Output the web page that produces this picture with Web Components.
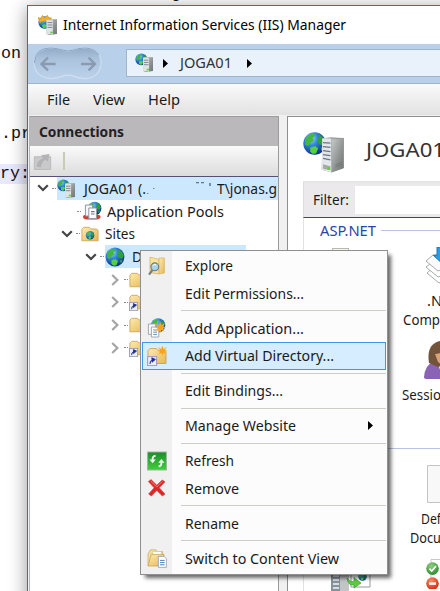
<!DOCTYPE html>
<html lang="en">
<head>
<meta charset="utf-8">
<title>Internet Information Services (IIS) Manager</title>
<style>
html,body{margin:0;width:440px;height:591px;overflow:hidden;background:#fff}
</style>
</head>
<body>
<iis-desktop></iis-desktop>
<script>
const define=(name,html,setup)=>customElements.define(name,class extends HTMLElement{
  connectedCallback(){
    if(this.shadowRoot)return;
    const r=this.attachShadow({mode:'open'});
    r.innerHTML=typeof html==='function'?html(this):html;
    if(setup)setup(this,r);
  }
});

/* One line of text, condensed to the width given in "w". */
define('fit-text','<style>:host{display:block;flex:none;white-space:nowrap}span{display:inline-block;transform-origin:0 50%}</style><span><slot></slot></span>',(el,r)=>{
  const w=+el.getAttribute('w');
  if(!w)return;
  const s=r.querySelector('span');
  s.style.transform='scaleX('+w/s.getBoundingClientRect().width+')';
  el.style.width=w+'px';
});

const defs=`<defs>
<radialGradient id="sea" cx=".35" cy=".28" r=".75"><stop offset="0" stop-color="#9fdcff"/><stop offset=".4" stop-color="#2f86d8"/><stop offset="1" stop-color="#0b2f86"/></radialGradient>
<linearGradient id="fold" x1="0" y1="0" x2="1" y2="1"><stop offset="0" stop-color="#fdebaf"/><stop offset="1" stop-color="#e6b752"/></linearGradient>
<linearGradient id="srv" x1="0" y1="0" x2="1" y2="1"><stop offset="0" stop-color="#c9cccb"/><stop offset=".6" stop-color="#8d9291"/><stop offset="1" stop-color="#6f7573"/></linearGradient>
<linearGradient id="grn" x1="0" y1="0" x2="0" y2="1"><stop offset="0" stop-color="#1e8a2c"/><stop offset="1" stop-color="#3fd03c"/></linearGradient>
<radialGradient id="ok" cx=".4" cy=".3" r=".7"><stop offset="0" stop-color="#8fd07a"/><stop offset="1" stop-color="#2f8a35"/></radialGradient>
<radialGradient id="no" cx=".4" cy=".3" r=".7"><stop offset="0" stop-color="#ff8a62"/><stop offset="1" stop-color="#d32d0c"/></radialGradient>
</defs>`;
/* A globe in a 20-unit box, placed at x,y with scale s. */
const globe=(x,y,s)=>`<g transform="translate(${x} ${y}) scale(${s})"><circle cx="10" cy="10" r="9.4" fill="url(#sea)"/><path d="M2.2 7Q4 2.6 8.6 1.6L10.6 3 8.4 5.4 9.4 7.6 6 9.6 4.6 12 2 11Z" fill="#45b83c"/><path d="M13 2.2Q17.6 4 18.8 8.6L17 12 13.6 10.4 12 6.6 14 4.6Z" fill="#2fa03c"/><path d="M6.4 13.2 10.4 12 13 14 11.2 18.4 8 18.6 6.4 16.4Z" fill="#55d042"/><path d="M15 13.4 17.6 13 15.8 16.4Z" fill="#3fae3a"/></g>`;
const tower=`<path d="M9 5.4 12 4.4 20 4.6V20L12 21 9 20Z" fill="url(#srv)"/><path d="M9 5.4H15.6V20.6L9 20Z" fill="#dfe3e3"/><path d="M10 8h5M10 10.5h5M10 13h5" stroke="#77808a" stroke-width="1"/><rect x="13" y="17.5" width="2.5" height="1.8" fill="#5fd432"/>`;
const star=(x,y,s)=>`<path transform="translate(${x} ${y}) scale(${s})" d="M0-5 1.2-1.9 4-3.6 2.4-.8 5.2 0 2.4 1 4 3.8 1.2 2.2 0 5-1.2 2.2-4 3.8-2.4 1-5.2 0-2.4-.8-4-3.6-1.2-1.9Z" fill="#f9a11f" stroke="#f6c465" stroke-width=".4"/>`;
const folder=`<path d="M1 4.5V17.5H19V6L17.4 4.4H11L9.4 2.6H3Z" fill="url(#fold)" stroke="#c9a250" stroke-width=".9"/>`;
const link=`<rect x=".6" y="10.6" width="9" height="9" fill="#eceef8" stroke="#9a9db4"/><path d="M3 18Q2.6 14.6 5 14.4V16.2L8.4 13.4 4.8 11.8V12.8" fill="#222c90" stroke="#222c90" stroke-width=".9"/>`;
const icons={
  iis:[22,22,globe(0,0,.7)+tower],
  app:[22,22,globe(0,1,.7)+'<path d="M.3 2.6 3 3.6 4.6 .4 7 2.8 10 .2 11.2 3 14 3 12.6 7.8Q6 5 1.6 8.2Z" fill="#f2af2c" stroke="#cc8515" stroke-width=".6"/>'+tower],
  server:[42,42,globe(-.4,-.4,1.22)+'<path d="M20 6.6 28 5 41.4 6.4V36.8L29 41 19 38.6Z" fill="url(#srv)"/><path d="M28.6 7 41.4 6.4V36.8L29 41Z" fill="url(#srv)" stroke="#868a88" stroke-width=".5"/><path d="M19.6 6.6 28.6 7 29 41 19.3 38.6Z" fill="#e3e7ec"/><path d="M20.4 10.8 28 11.4M20.4 15 28 15.8M20.4 19 28 20M20.4 23 28 24M20.4 27 28 28.4" stroke="#6c7683" stroke-width="1.3"/><path d="M20.4 33 28 35V39L20.4 37.4Z" fill="#a6aaa8"/><rect x="25" y="36.2" width="2.6" height="2" fill="#57d61f"/><path d="M33 33.5 39.8 31M33 35.6 39.8 33" stroke="#747977" stroke-width="1"/>'],
  globe:[20,20,globe(0,0,1)],
  pools:[20,20,globe(5.4,.2,.72)+'<path d="M1 16Q1 13.4 5 13.4H14.6Q18.6 13.6 18.6 16 18 18.6 14 18.4H5Q1.2 18.4 1 16Z" fill="#d63b34"/><path d="M3.4 4H10.6V15H3.4Z" fill="#f5f6fa" stroke="#9196a2"/><path d="M6.8 7H14.4V17.6H6.8Z" fill="#fff" stroke="#9196a2"/><path d="M9 10.6h3.6M9 13h3.6" stroke="#6f7583" stroke-width="1.2"/>'],
  sites:[20,20,folder+globe(5.1,6.4,.5)],
  folder:[20,20,folder],
  linked:[20,20,folder+link],
  explore:[20,20,'<path d="M3 1.2 12 3.4V18L3 16.6Z" fill="#fbe39a" stroke="#d6b566" stroke-width=".8"/><path d="M12 2H17.4V17L12 18Z" fill="url(#fold)" stroke="#d0ab58" stroke-width=".6"/><path d="M5.4 14.2 2 18.6" stroke="#777d84" stroke-width="2.2"/><circle cx="7.8" cy="10.8" r="3.9" fill="#a9d3ea" stroke="#687a86" stroke-width="1.1"/><path d="M5.8 9.8Q7 8 9.2 8.8" fill="none" stroke="#fff"/>'],
  addapp:[20,20,globe(3.5,-.2,.76)+'<path d="M1.4 6H8.6V16.4H1.4Z" fill="#f8f9fc" stroke="#a4a8ae"/><path d="M4.4 9H11.8V19H4.4Z" fill="#fff" stroke="#a4a8ae"/><path d="M6.2 12h3.8M6.2 14.2h3.8M6.2 16.4h3.8" stroke="#6591bd"/>'+star(13.2,9.4,1.05)],
  addvdir:[20,20,folder+link+star(15.4,4.8,1)],
  refresh:[20,20,'<rect x=".6" y="1" width="18.8" height="18" fill="url(#grn)" stroke="#9bb59c"/><path d="M8.6 4.8Q5.4 5 5.6 9" fill="none" stroke="#e9f8e9" stroke-width="1.9"/><path d="M2.4 8.4H8.8L5.6 12.2Z" fill="#e9f8e9"/><path d="M11.6 15.4Q14.8 15 14.4 11" fill="none" stroke="#e9f8e9" stroke-width="1.9"/><path d="M11.2 11.8H17.6L14.4 8Z" fill="#e9f8e9"/>'],
  remove:[20,20,'<path d="M1.4 3.6 4 1.6 9.8 7.2 15.2 2 18 3.8 12.2 9.8 18 16 15.4 18 9.8 12.4 4.4 18 1.6 16 7.2 9.8Z" fill="#df2426" stroke="#c44a48" stroke-width=".7"/><path d="M3.6 3.2 9.8 9 15.4 3.4" fill="none" stroke="#f77b73"/>'],
  content:[20,20,'<path d="M1 18V6L3.4 1.8H9L10.4 3.6H15.6V7" fill="#f5dd9c" stroke="#d0b06a" stroke-width=".8"/><path d="M5.8 3.6H14.4V10H5.8Z" fill="#fff" stroke="#bdbdbd" stroke-width=".6"/><path d="M4.2 6.4H17V18H1Z" fill="url(#fold)" stroke="#c9a55c" stroke-width=".8"/><path d="M11.4 8.4H17L19.4 10.8V19.4H11.4Z" fill="#fff" stroke="#8fa0b5" stroke-width=".8"/><path d="M13 12.4h4.6M13 14.6h4.6M13 16.8h4.6" stroke="#4d82bc"/>'],
  connect:[20,20,'<path d="M1.4 5H18.6V18.4H1.4Z" fill="#c9c8ca" stroke="#bab9bb"/><path d="M4 15.4Q4.4 8.6 10.6 6.6L8.6 3.4 17.4 2 15.6 9.8 13 8.2Q9 10 8.4 16Z" fill="#b3b2b4"/>'],
  down:[12,8,'<path d="M1.2 1.2 6 6 10.8 1.2" fill="none" stroke="#454545" stroke-width="2.2"/>'],
  right:[8,12,'<path d="M1.2 1 6.4 6 1.2 11" fill="none" stroke="#a5a5a5" stroke-width="2.2"/>'],
  tri:[5,9,'<path d="M0 0 5 4.5 0 9Z" fill="#000"/>'],
  scrap:[72,20,'<path d="M7 10.5h1.4M1 15.5h1.4" stroke="#6f8598"/><path d="M50 4.6h3M55 4.6h3" stroke="#5d7386" stroke-width="1.2"/><path d="M64 5V8" stroke="#3d5163" stroke-width="1.2"/>'],
  stack:[28,38,'<path d="M2 26 14 36 28 30V18L10 19Z" fill="#fff" stroke="#a9abad"/><path d="M1 20 13 30 28 24V13L9 14Z" fill="#fff" stroke="#a9abad"/><path d="M1 14 13 24 28 18V6L8 8Z" fill="#fbfbfc" stroke="#a9abad"/><path d="M12 0H28V18H19L8.4 8.4H12Z" fill="#2b9de2" stroke="#1b78bb"/>'],
  user:[28,38,'<path d="M0 36Q1 24 9 21L21 22 28 28V38H3Q0 38 0 36Z" fill="#8a63b4"/><path d="M14 24 28 22V38H20Z" fill="#d6eedb"/><path d="M5 22Q2 3 16 0 24-1 28 3V20L14 26Z" fill="#74533b"/><path d="M11 13Q18 13 20 7L28 10V22Q20 26 14 21Z" fill="#d9a477"/>'],
  page:[20,38,'<path d="M.5.5H20V37.5H.5Z" fill="#f8f8f8" stroke="#c4c4c4"/>'],
  check:[16,30,'<path d="M5 .5H16V30H5Z" fill="#fff" stroke="#c8c8c8"/><circle cx="6.5" cy="9.6" r="6.3" fill="url(#ok)"/><path d="M3.4 9.6 5.8 12 10 7" fill="none" stroke="#fff" stroke-width="1.7"/><circle cx="6.5" cy="24.6" r="6.3" fill="url(#no)"/><path d="M3 24.6H10" stroke="#fff" stroke-width="2.4"/>'],
  export:[40,24,'<path d="M0 0H9V24H0Z" fill="#8a9299"/><path d="M2 7h6M2 11h6M2 15h6M2 19h6" stroke="#d5dde5" stroke-width="2"/><path d="M9 0H18V22L9 24Z" fill="#c2c5c6"/><path d="M20 0H39V18H20Z" fill="#fff" stroke="#999"/>'+globe(27,3,.45)+'<path d="M16 9Q20 14 23 12V8.6L30 14 23 19V16Q17 17 16 9Z" fill="#5ecb3e" stroke="#2e9a22" stroke-width=".6"/>'],
  nav:[70,36,'<defs><linearGradient id="nv" x1="0" y1="0" x2="0" y2="1"><stop offset="0" stop-color="#93aac6"/><stop offset=".35" stop-color="#abc2dd"/><stop offset="1" stop-color="#bcd2ea"/></linearGradient></defs><path d="M17 2Q24 2 30 4.2 35 5.8 40 4.2 46 2 52 2 68 3 68 17 67 32 52 32.6 46 32.6 41 30.4 35 28 29 30.4 23 33 17 32.6 2 31 1 17 2 3 17 2Z" fill="url(#nv)" stroke="#cfdff1" stroke-width="1.2"/><path d="M1.4 17Q2 2 17 2 24 2 30 4.2 35 5.8 40 4.2 46 2 52 2 62 2.4 66 9" fill="none" stroke="#8ea4bf"/><path d="M22.6 18H9M15 11.6 8.4 18 15 24.4M48 18H61.6M55.6 11.6 62 18 55.6 24.4" fill="none" stroke="#8a9bb1" stroke-width="2.3"/>']
};
define('ui-icon',el=>{
  const [w,h,body]=icons[el.getAttribute('name')];
  const s=+(el.getAttribute('scale')||1);
  return `<style>:host{display:block;flex:none;width:${w*s}px;height:${h*s}px}svg{display:block;width:100%;height:100%}</style><svg viewBox="0 0 ${w} ${h}">${defs}${body}</svg>`;
});

/* Text editor lying behind the window. */
define('code-backdrop',`<style>
:host{display:block;font:16.7px/20px "Liberation Mono",monospace;color:#111;margin-top:-16px;overflow:hidden}
div{height:20px;white-space:pre}.hl{background:#e8e8ff}</style>
<div style="padding-left:171px">g</div><div></div><div></div><div style="padding-left:1px">on</div><div></div><div></div><div></div><div style="padding-left:1px">.pr</div><div></div><div class="hl" style="width:60px">ry:</div>`);

define('title-bar',`<style>:host{display:flex;align-items:center;height:38px;padding-left:10px;gap:4px;background:#fff;color:#000;font-size:14.5px}</style>
<ui-icon name="app" scale=".95"></ui-icon><fit-text w="283">Internet Information Services (IIS) Manager</fit-text>`);

define('nav-bar',`<style>:host{display:flex;height:40px;background:#b9d0ea;border-bottom:1px solid #9db5cf;box-sizing:border-box;padding-left:5px;align-items:center}
.addr{flex:1;margin-left:23px;height:26px;border:1px solid #9eb6c9;border-right:0;background:#e9f1fa;display:flex;align-items:center;padding-left:8px;color:#333;font-size:14px;margin-top:-1px}
</style><ui-icon name="nav"></ui-icon><div class="addr"><ui-icon name="iis" scale=".9"></ui-icon><ui-icon name="tri" style="margin:1px 12px 0 8px"></ui-icon><fit-text w="52">JOGA01</fit-text><ui-icon name="tri" style="margin:1px 0 0 15px"></ui-icon></div>`);

define('menu-bar',`<style>:host{display:flex;height:31px;align-items:center;padding-left:19px;background:linear-gradient(#fafafa,#e2e2e2);font-size:14.3px;color:#1a1a1a;box-sizing:border-box}</style>
<fit-text w="23">File</fit-text><fit-text w="32" style="margin-left:23px">View</fit-text><fit-text w="32" style="margin-left:23px">Help</fit-text>`);

define('tree-row',el=>`<style>
:host{display:flex;height:22.8px;align-items:center;font-size:14.3px;color:#1a1a1a;padding-left:${el.getAttribute('indent')}px}
.arrow{width:12px;display:flex;justify-content:center;flex:none}
.dots{width:4px;border-top:1px dotted #888;margin:0 1px 0 3px;flex:none}
.label{display:flex;align-items:center;height:100%;gap:${el.getAttribute('gap')||6}px;flex:${el.hasAttribute('fill')?'1':'none'};${el.hasAttribute('sel')?'background:#cce8ff':''};${el.getAttribute('sel')?'width:'+el.getAttribute('sel')+'px':''}}
</style><div class="arrow">${el.getAttribute('arrow')?`<ui-icon name="${el.getAttribute('arrow')}"></ui-icon>`:''}</div><div class="dots"></div><div class="label"><ui-icon name="${el.getAttribute('icon')}" scale="${el.getAttribute('scale')||.9}"></ui-icon><slot></slot></div>`);

define('connections-pane',`<style>
:host{display:block;width:248px;border:1px solid #9c9c9c;border-left-color:#b5b5b5;background:#fff;box-sizing:content-box;overflow:hidden}
.head{height:29px;background:#bab8bb;display:flex;align-items:center;padding-left:9px;font-size:14.2px;font-weight:700;color:#222}
.tools{height:30px;background:linear-gradient(#fafafa,#dddcdd);border-bottom:1px solid #565078;display:flex;align-items:center;padding-left:3px;gap:11px}
.tools i{width:2px;height:18px;background:#c9c9b4}
</style>
<div class="head"><fit-text w="85">Connections</fit-text></div>
<div class="tools"><ui-icon name="connect" scale=".95"></ui-icon><i></i></div>
<tree-row indent="7" arrow="down" icon="iis" fill sel scale=".9" gap="7"><fit-text w="62">JOGA01 (.</fit-text><ui-icon name="scrap" style="margin-left:-7px"></ui-icon><fit-text w="60" style="margin-left:-8px">T\\jonas.g</fit-text></tree-row>
<tree-row indent="32" icon="pools" scale="1" gap="5"><fit-text w="117">Application Pools</fit-text></tree-row>
<tree-row indent="31" arrow="down" icon="sites"><fit-text w="30">Sites</fit-text></tree-row>
<tree-row indent="55" arrow="down" icon="globe" sel="141" scale="1" gap="7"><fit-text w="10">D</fit-text></tree-row>
<tree-row indent="79" arrow="right" icon="folder"></tree-row>
<tree-row indent="79" arrow="right" icon="linked"></tree-row>
<tree-row indent="79" arrow="right" icon="folder"></tree-row>
<tree-row indent="79" arrow="right" icon="linked"></tree-row>`);

define('feature-pane',`<style>
:host{display:block;flex:1;border:1px solid #8e8e8e;border-right:0;background:#fff;padding:15px 0 0 15px;overflow:hidden;color:#1a1a1a;font-size:14.3px}
.title{display:flex;height:41px;gap:22px;font-size:20.5px;color:#333}
.title fit-text{line-height:35px}
.filter{margin-top:8px;height:34px;border-top:2px solid #e6e6e6;border-left:1px solid #dcdcdc;border-bottom:1px solid #47406e;background:#ece9ec;display:flex;align-items:center;padding-left:9px;gap:6px}
.box{flex:1;background:#fff;height:28px}
.body{border-left:1px solid #e2e2e2;height:380px}
.group{display:flex;align-items:center;height:25px;padding-left:16px;gap:5px;color:#2b45a3}
.group i{flex:1;height:1px;background:#b7c4e3}
.tiles{display:grid;grid-template-columns:95px 1fr;height:205px}
.tile{line-height:19px;margin-left:-3px}
.mini{width:15px;height:9px;border:1px solid #b8b8b0;background:#f7f7f0;margin:5px 0 0 28px}
</style>
<div class="title"><ui-icon name="server" scale=".98"></ui-icon><fit-text w="79">JOGA01</fit-text></div>
<div class="filter"><fit-text w="36">Filter:</fit-text><div class="box"></div></div>
<div class="body">
<div class="group"><fit-text w="56">ASP.NET</fit-text><i></i></div>
<div class="tiles"><div><div class="mini"></div></div><div class="tile">
<ui-icon name="stack" style="margin:4px 0 6px 29px"></ui-icon><fit-text w="15" style="margin-left:31px">.N</fit-text><fit-text w="37" style="margin-left:7px">Comp</fit-text>
<ui-icon name="user" style="margin:12px 0 6px 28px"></ui-icon><fit-text w="39" style="margin-left:6px">Sessio</fit-text></div></div>
<div class="group" style="height:1px;padding:0"><i></i></div>
<div class="tiles"><div><ui-icon name="export" style="margin:120px 0 0 27px"></ui-icon></div><div class="tile">
<ui-icon name="page" style="margin:16px 0 6px 31px"></ui-icon><fit-text w="20" style="margin-left:25px">Def</fit-text><fit-text w="31" style="margin-left:14px">Docu</fit-text><ui-icon name="check" style="margin:12px 0 0 30px"></ui-icon></div></div>
</div>`);

define('iis-window',`<style>
:host{display:flex;flex-direction:column;border:1px solid #2378bd;background:#f0f0f0;box-shadow:0 3px 17px rgba(0,0,0,.42);box-sizing:border-box}
.work{display:flex;flex:1;gap:8px;padding:1px 0 0 1px;min-height:0}
</style><title-bar></title-bar><nav-bar></nav-bar><menu-bar></menu-bar><div class="work"><connections-pane></connections-pane><feature-pane></feature-pane></div>`);

define('menu-item',el=>`<style>
:host{display:flex;height:27.5px;align-items:center;padding:0 15px 0 5px;box-sizing:border-box;color:#1a1a1a;font-size:14.5px}
:host([active]){background:#d5edff;box-shadow:inset 0 0 0 1px #3b97f2}
.ico{width:20px;margin-right:18px;flex:none}fit-text{flex:none}.more{margin-left:auto;margin-right:-2px}</style>
<div class="ico">${el.getAttribute('icon')?`<ui-icon name="${el.getAttribute('icon')}"></ui-icon>`:''}</div><fit-text w="${el.getAttribute('w')}">${el.getAttribute('label')}</fit-text>${el.hasAttribute('sub')?'<ui-icon class="more" name="tri"></ui-icon>':''}`);
define('menu-rule','<style>:host{display:flex;height:7.5px;align-items:center;padding-left:39px}i{flex:1;height:1px;background:#d0cdc5}</style><i></i>');

define('context-menu',`<style>
:host{display:block;box-sizing:border-box;border:1px solid #8f8f8f;padding:1px;background:linear-gradient(90deg,#f0f0f0 31px,#fcfcfc 31px);box-shadow:4px 4px 4px -1px rgba(0,0,0,.6)}
</style>
<menu-item icon="explore" label="Explore" w="48"></menu-item>
<menu-item label="Edit Permissions..." w="119"></menu-item>
<menu-rule></menu-rule>
<menu-item icon="addapp" label="Add Application..." w="119"></menu-item>
<menu-item active icon="addvdir" label="Add Virtual Directory..." w="149"></menu-item>
<menu-rule></menu-rule>
<menu-item label="Edit Bindings..." w="98"></menu-item>
<menu-rule></menu-rule>
<menu-item sub label="Manage Website" w="111"></menu-item>
<menu-rule></menu-rule>
<menu-item icon="refresh" label="Refresh" w="49"></menu-item>
<menu-item icon="remove" label="Remove" w="54"></menu-item>
<menu-rule></menu-rule>
<menu-item label="Rename" w="54"></menu-item>
<menu-rule></menu-rule>
<menu-item icon="content" label="Switch to Content View" w="154"></menu-item>`);

define('iis-desktop',`<style>
:host{display:block;position:relative;width:440px;height:591px;overflow:hidden;background:#fff;font-family:"Noto Sans","Open Sans",sans-serif;line-height:1.2}
code-backdrop{position:absolute;left:0;top:0;width:440px}
iis-window{position:absolute;left:27px;top:5px;width:430px;height:610px}
context-menu{position:absolute;left:140px;top:250px;width:248px;height:325px}
</style><code-backdrop></code-backdrop><iis-window></iis-window><context-menu></context-menu>`);
</script>
</body>
</html>
